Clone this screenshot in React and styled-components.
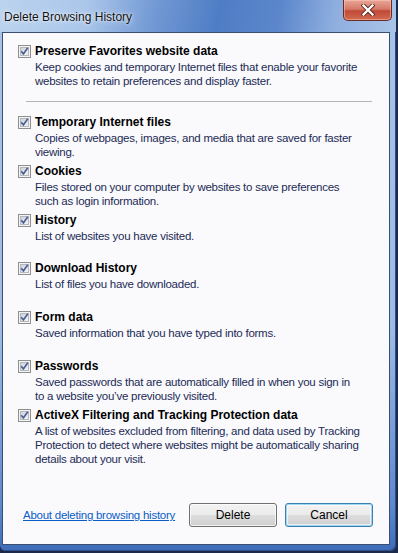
import React from 'react'
import styled, { createGlobalStyle } from 'styled-components'

const Global = createGlobalStyle`
  html, body {
    margin: 0;
    padding: 0;
    background: #1d2a4a;
    width: 398px;
    height: 553px;
    overflow: hidden;
  }
`

const Window = styled.div`
  width: 396px;
  height: 551px;
  border-radius: 0 0 6px 6px;
  background: linear-gradient(180deg, #a9c4e8 0%, #9dbbe4 60%, #5d88cc 92%, #3f6cb8 100%);
  box-shadow: inset -1px -1px 0 #2c4f8c;
  display: flex;
  flex-direction: column;
  overflow: hidden;
`

const TitleBar = styled.div`
  height: 32px;
  flex: none;
  display: flex;
  align-items: flex-start;
  justify-content: space-between;
  background: linear-gradient(100deg, #bcd3ef 0%, #aac6ea 22%, #6f97d3 40%, #4f7dc5 55%, #5b86cb 70%, #8eaedf 84%, #a9c4e8 100%);
`

const Caption = styled.div`
  font-family: 'Liberation Sans', Arial, sans-serif;
  font-size: 12px;
  color: #111;
  padding: 10px 0 0 4px;
  text-shadow: 0 0 6px rgba(255, 255, 255, 0.9), 0 0 2px rgba(255, 255, 255, 0.9);
`

const CloseButton = styled.div`
  width: 47px;
  height: 20px;
  margin-right: 4px;
  border: 1px solid #6b2a22;
  border-top: none;
  border-radius: 0 0 5px 5px;
  background: linear-gradient(180deg, #e9a697 0%, #d67a68 45%, #c04a36 55%, #d26a52 100%);
  box-shadow: inset 0 0 0 1px rgba(255, 210, 200, 0.45);
  display: flex;
  align-items: center;
  justify-content: center;
`

const Client = styled.div`
  flex: 1;
  margin: 0 6px 6px 2px;
  border: 1px solid #3b4f74;
  background: #fafafd;
  display: flex;
  flex-direction: column;
  padding: 11px 16px 17px 15px;
  font-family: 'Liberation Sans', Arial, sans-serif;
  font-size: 11.5px;
  letter-spacing: -0.25px;
`

const Item = styled.div`
  display: flex;
  align-items: flex-start;
  gap: 4px;
  height: ${p => (p.$fixed ? '48.8px' : 'auto')};
  flex: none;
`

const Box = styled.div`
  width: 13px;
  height: 13px;
  flex: none;
  margin-top: 1px;
`

const Texts = styled.div`
  display: flex;
  flex-direction: column;
`

const Title = styled.div`
  font-weight: bold;
  color: #000;
  line-height: 15px;
  font-size: 12px;
  letter-spacing: 0;
`

const Desc = styled.div`
  color: #1c2a55;
  line-height: 14px;
  margin-top: 1px;
  white-space: nowrap;
`

const Separator = styled.div`
  height: 1px;
  background: #b4b4b4;
  margin: 13px 1px 13px 8px;
  flex: none;
`

const Footer = styled.div`
  margin-top: auto;
  display: flex;
  align-items: center;
  padding-left: 5px;
`

const Link = styled.a`
  color: #0a5cc6;
  text-decoration: underline;
  cursor: pointer;
  white-space: nowrap;
  margin-right: auto;
`

const Button = styled.button`
  width: 88px;
  height: 24px;
  margin-left: 8px;
  font-family: 'Liberation Sans', Arial, sans-serif;
  font-size: 12px;
  color: #000;
  border-radius: 3px;
  border: 1px solid ${p => (p.$primary ? '#3c7fb1' : '#707070')};
  background: linear-gradient(180deg, #f2f2f2 0%, #ebebeb 48%, #dddddd 52%, #cfcfcf 100%);
  box-shadow: ${p =>
    p.$primary
      ? 'inset 0 0 0 1px #9fd6f3, inset 0 0 0 2px rgba(255,255,255,0.6)'
      : 'inset 0 0 0 1px rgba(255,255,255,0.7)'};
  padding: 0;
`

const CheckBox = () => (
  <Box>
    <svg width="13" height="13" viewBox="0 0 13 13">
      <defs>
        <linearGradient id="cbg" x1="0" y1="0" x2="1" y2="1">
          <stop offset="0" stopColor="#cbcfd5" />
          <stop offset="1" stopColor="#f7f7f7" />
        </linearGradient>
      </defs>
      <rect x="0.5" y="0.5" width="12" height="12" fill="#f4f4f4" stroke="#8e8f8f" />
      <rect x="2.5" y="2.5" width="8" height="8" fill="url(#cbg)" stroke="#b5b8bd" />
      <path d="M3.2 6.3 L5.4 8.9 L9.8 2.8" fill="none" stroke="#4a5f97" strokeWidth="1.7" />
    </svg>
  </Box>
)

const items = [
  ['Temporary Internet files', ['Copies of webpages, images, and media that are saved for faster', 'viewing.']],
  ['Cookies', ['Files stored on your computer by websites to save preferences', 'such as login information.']],
  ['History', ['List of websites you have visited.']],
  ['Download History', ['List of files you have downloaded.']],
  ['Form data', ['Saved information that you have typed into forms.']],
  ['Passwords', ['Saved passwords that are automatically filled in when you sign in', 'to a website you\u2019ve previously visited.']],
  ['ActiveX Filtering and Tracking Protection data', ['A list of websites excluded from filtering, and data used by Tracking', 'Protection to detect where websites might be automatically sharing', 'details about your visit.']],
]

export default function App() {
  return (
    <>
      <Global />
      <Window>
        <TitleBar>
          <Caption>Delete Browsing History</Caption>
          <CloseButton>
            <svg width="14" height="12" viewBox="0 0 14 12">
              <path d="M2.5 1.5 L11.5 10.5 M11.5 1.5 L2.5 10.5" stroke="#5a1e18" strokeWidth="4" strokeLinecap="square" />
              <path d="M2.5 1.5 L11.5 10.5 M11.5 1.5 L2.5 10.5" stroke="#ffffff" strokeWidth="2.4" strokeLinecap="square" />
            </svg>
          </CloseButton>
        </TitleBar>
        <Client>
          <Item>
            <CheckBox />
            <Texts>
              <Title>Preserve Favorites website data</Title>
              <Desc>
                Keep cookies and temporary Internet files that enable your favorite
                <br />
                websites to retain preferences and display faster.
              </Desc>
            </Texts>
          </Item>
          <Separator />
          {items.map(([t, lines]) => (
            <Item key={t} $fixed>
              <CheckBox />
              <Texts>
                <Title>{t}</Title>
                <Desc>
                  {lines.map((l, i) => (
                    <React.Fragment key={i}>
                      {i > 0 && <br />}
                      {l}
                    </React.Fragment>
                  ))}
                </Desc>
              </Texts>
            </Item>
          ))}
          <Footer>
            <Link>About deleting browsing history</Link>
            <Button>Delete</Button>
            <Button $primary>Cancel</Button>
          </Footer>
        </Client>
      </Window>
    </>
  )
}
